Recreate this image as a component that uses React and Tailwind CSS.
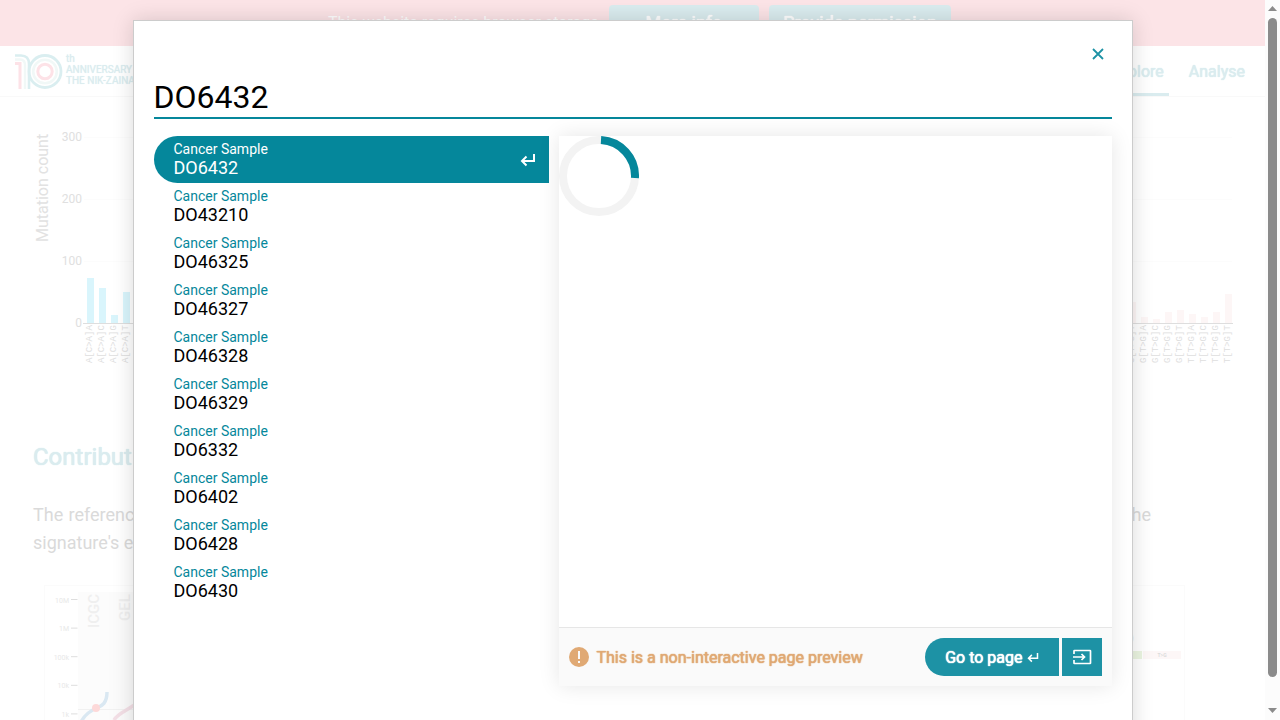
import React from "react";

const samples = [
  "DO6432",
  "DO43210",
  "DO46325",
  "DO46327",
  "DO46328",
  "DO46329",
  "DO6332",
  "DO6402",
  "DO6428",
  "DO6430",
];

const leftBars = [
  ["A[C>A]A", 45],
  ["A[C>A]C", 35],
  ["A[C>A]G", 8],
  ["A[C>A]T", 31],
];

const rightBars = [
  ["C[T>G]T", 21],
  ["G[T>G]A", 6],
  ["G[T>G]C", 4],
  ["G[T>G]G", 11],
  ["G[T>G]T", 13],
  ["T[T>G]A", 9],
  ["T[T>G]C", 6],
  ["T[T>G]G", 11],
  ["T[T>G]T", 29],
];

function ReturnIcon({ className }) {
  return (
    <svg viewBox="0 0 16 14" className={className} fill="none" stroke="currentColor" strokeWidth="2" aria-hidden="true">
      <path d="M14 1V8H2.500M6.500 3.500L2 8L6.500 12.500" />
    </svg>
  );
}

function Logo() {
  return (
    <svg viewBox="0 0 48 36" className="h-9 w-12 shrink-0" fill="none" aria-hidden="true">
      <path d="M0 1.500H6Q14 1.500 14 10V35" stroke="#daeef0" strokeWidth="2.600" />
      <path d="M0 5.500H5Q10 5.500 10 11V35" stroke="#f1f8f7" strokeWidth="2.400" />
      <path d="M0 9.500H5V35" stroke="#fde2e7" strokeWidth="3" />
      <circle cx="30" cy="17.500" r="16" stroke="#daeef0" strokeWidth="2.800" />
      <circle cx="30" cy="17.500" r="11.800" stroke="#f1f8f7" strokeWidth="2.600" />
      <circle cx="30" cy="17.500" r="7.200" stroke="#fde2e7" strokeWidth="3" />
    </svg>
  );
}

function Bars({ items, start, color }) {
  return items.map(([label, value], i) => {
    const x = start + i * 12;
    return (
      <g key={label}>
        <rect x={x} y={203 - value} width="7" height={value} fill={color} />
        <text
          transform={`translate(${x + 5} 243) rotate(-90)`}
          fontSize="9"
          fill="#dedede"
          fontFamily="'Liberation Mono', monospace"
        >
          {label}
        </text>
      </g>
    );
  });
}

function MutationChart() {
  return (
    <svg viewBox="0 0 1265 260" className="block w-full" fontFamily="Roboto, sans-serif">
      <text transform="translate(48 122) rotate(-90)" fontSize="16" fill="#e2e2e2">
        Mutation count
      </text>
      {[300, 200, 100, 0].map((tick, i) => (
        <g key={tick}>
          <text x="82" y={21 + i * 62} fontSize="12" fill="#e0e0e0" textAnchor="end">
            {tick}
          </text>
          <path d={`M84 ${17.5 + i * 62}H1232`} stroke="#fcfcfc" />
        </g>
      ))}
      <Bars items={leftBars} start={87} color="#d9f5fc" />
      <Bars items={rightBars} start={1129} color="#fdf6f6" />
      <path d="M83 203.500H1233" stroke="#dedede" />
    </svg>
  );
}

function ContributionChart() {
  return (
    <svg viewBox="0 0 1265 140" className="block w-full" fontFamily="Roboto, sans-serif">
      <rect x="44.500" y="5.500" width="1140" height="160" fill="none" stroke="#fbfbfb" />
      <rect x="78" y="12" width="31" height="128" fill="#fcfcfc" />
      <rect x="109" y="12" width="31" height="128" fill="#fbfbfb" />
      {["10M", "1M", "100k", "10k", "1k"].map((tick, i) => (
        <g key={tick}>
          <text x="69" y={22.5 + i * 28.6} fontSize="7" fill="#e8e8e8" textAnchor="end">
            {tick}
          </text>
          <path d={`M71 ${19.5 + i * 28.6}h6.500`} stroke="#dedede" />
        </g>
      ))}
      <text transform="translate(99 48) rotate(-90)" fontSize="15" fontWeight="500" fill="#efefef">
        ICGC
      </text>
      <text transform="translate(130 41) rotate(-90)" fontSize="15" fontWeight="500" fill="#efefef">
        GEL
      </text>
      <path d="M78 129.500H140" stroke="#f1f1f1" />
      <path d="M81 142C85 134 92 130 97 128S107 123 107 112" fill="none" stroke="#dae8f2" strokeWidth="3.500" />
      <circle cx="96" cy="128" r="4" fill="#fdd9d9" />
      <path d="M114 140C118 133 127 131 140 121" fill="none" stroke="#f3dfe6" strokeWidth="3.500" />
      <rect x="1100" y="71" width="42" height="8" fill="#ebf5e1" />
      <rect x="1143" y="71" width="38" height="8" fill="#fdf7f7" />
      <text x="1162" y="77" fontSize="5" fontWeight="700" fill="#dcdcdc" textAnchor="middle">
        T&gt;G
      </text>
      <text x="1134" y="62" fontSize="12" fill="#d6d6d6" textAnchor="end">
        )
      </text>
    </svg>
  );
}

function Page() {
  return (
    <div className="h-full overflow-hidden">
      <div className="flex h-[46px] items-start gap-2.5 bg-[#fce4e7] pl-[328px] pt-[5px] whitespace-nowrap text-white">
        <p className="w-[271px] pt-1.5 text-base">This website requires browser storage</p>
        <button className="h-9 w-[150px] rounded-sm bg-[#daecef] text-lg [text-shadow:0_0_1px_currentColor,0_0_1px_currentColor]">
          More info
        </button>
        <button className="h-9 w-[182px] rounded-sm bg-[#daecef] text-lg [text-shadow:0_0_1px_currentColor,0_0_1px_currentColor]">
          Provide permission
        </button>
      </div>
      <header className="flex h-[51px] items-stretch justify-between border-b border-[#f9f9f9] pr-[15px] pl-[15px]">
        <div className="flex items-center gap-[3px] pt-0.5 text-[10px] leading-[11px] text-[#daecef] [text-shadow:0_0_1px_currentColor]">
          <Logo />
          <div className="pb-1.5">
            <div>th</div>
            <div>ANNIVERSARY OF</div>
            <div>THE NIK-ZAINAL LAB</div>
          </div>
        </div>
        <nav className="flex gap-[15px] text-base text-[#daecef] [text-shadow:0_0_1px_currentColor,0_0_1px_currentColor]">
          <a href="#explore" className="flex items-center border-b-[3px] border-[#daecef] px-[5px] pt-1">
            Explore
          </a>
          <a href="#analyse" className="flex items-center border-b-[3px] border-transparent px-[5px] pt-1">
            Analyse
          </a>
        </nav>
      </header>
      <div className="pt-[23px]">
        <MutationChart />
      </div>
      <section className="pr-8 pl-[33px] pt-[61px]">
        <h2 className="text-2xl text-[#daecef] [text-shadow:0_0_1px_currentColor,0_0_1px_currentColor]">Contributions</h2>
        <p className="mr-[82px] mt-7 text-justify text-lg leading-7 text-[#dadada]">
          The reference signature contributions in every sample were shown below. Each point is the number of
          mutations that were assigned to the signature&apos;s exposure in a tumour.
        </p>
      </section>
      <div className="pt-[23px]">
        <ContributionChart />
      </div>
    </div>
  );
}

function SearchDialog() {
  return (
    <div
      role="dialog"
      aria-label="Search"
      className="flex h-[760px] w-[1000px] max-w-full flex-col border border-[#ccc] bg-white px-5 shadow-[0_0_20px_rgba(0,0,0,0.15)]"
    >
      <div className="flex h-14 items-center justify-end pt-[9px]">
        <button aria-label="Close" className="flex size-7 items-center justify-center text-[#1d92a5]">
          <svg viewBox="0 0 12 12" className="size-3" stroke="currentColor" strokeWidth="1.800" aria-hidden="true">
            <path d="M1 1L11 11M11 1L1 11" />
          </svg>
        </button>
      </div>
      <input
        aria-label="Search term"
        defaultValue="DO6432"
        className="h-[42px] w-full shrink-0 border-b-2 border-[#05879b] bg-transparent text-[32px] text-black outline-none"
      />
      <div className="mt-[17px] flex gap-2.5">
        <ul className="w-[395px] shrink-0">
          {samples.map((id, i) => (
            <li key={id}>
              <a
                href={`#${id}`}
                className={
                  i === 0
                    ? "flex h-[47px] items-center justify-between rounded-l-full bg-[#05879b] pr-[13px] pl-5 text-white"
                    : "flex h-[47px] items-center pl-5 text-black"
                }
              >
                <span className="flex flex-col pb-px">
                  <span className={i === 0 ? "text-sm leading-[18px]" : "text-sm leading-[18px] text-[#05879b]"}>
                    Cancer Sample
                  </span>
                  <span className="text-lg leading-5">{id}</span>
                </span>
                {i === 0 && <ReturnIcon className="h-[14px] w-4" />}
              </a>
            </li>
          ))}
        </ul>
        <section className="flex h-[550px] min-w-0 flex-1 flex-col bg-white shadow-[0_0_20px_rgba(0,0,0,0.1)]">
          <div className="flex-1">
            <svg viewBox="0 0 80 80" className="size-20" fill="none" strokeWidth="8" role="status" aria-label="Loading">
              <circle cx="40" cy="40" r="36" stroke="#f3f3f3" />
              <path d="M42 4.060A36 36 0 0 1 75.940 42" stroke="#05879b" />
            </svg>
          </div>
          <footer className="flex h-[59px] items-center justify-between border-t border-[#e6e6e6] bg-[#fafafa] px-2.5">
            <p className="flex items-center gap-2 text-[#e0a974] [text-shadow:0_0_1px_currentColor,0_0_1px_currentColor]">
              <svg viewBox="0 0 20 20" className="size-5" aria-hidden="true">
                <circle cx="10" cy="10" r="10" fill="currentColor" />
                <path d="M9 4h2v8H9zM9 14h2v2H9z" fill="#fafafa" />
              </svg>
              <span className="pt-0.5">This is a non-interactive page preview</span>
            </p>
            <div className="flex gap-[3px] text-white">
              <button className="flex h-[38px] items-center gap-1 rounded-l-full bg-[#1d92a5] pr-5 pl-5 [text-shadow:0_0_1px_currentColor,0_0_1px_currentColor]">
                <span className="pt-0.5">Go to page</span>
                <ReturnIcon className="h-[11px] w-3" />
              </button>
              <button aria-label="Open page" className="flex h-[38px] w-10 items-center justify-center bg-[#1d92a5]">
                <svg viewBox="0 0 20 16" className="h-4 w-5" fill="none" stroke="currentColor" strokeWidth="1.700" aria-hidden="true">
                  <path d="M2 5V2Q2 1.500 2.500 1.500H18Q18.500 1.500 18.500 2V14Q18.500 14.500 18 14.500H2.500Q2 14.500 2 14V11M1 8H12M9.500 5L12.500 8L9.500 11" />
                </svg>
              </button>
            </div>
          </footer>
        </section>
      </div>
    </div>
  );
}

export default function App() {
  return (
    <div className="flex h-screen overflow-hidden bg-white font-[Roboto,sans-serif]">
      <main className="relative min-w-0 flex-1">
        <Page />
        <div className="absolute inset-0 flex items-start justify-center overflow-hidden pt-5">
          <SearchDialog />
        </div>
      </main>
      <div className="flex w-[15px] shrink-0 flex-col items-center bg-[#fcfcfc] pt-[6px] pb-[7px]" aria-hidden="true">
        <svg viewBox="0 0 9 5" className="h-[5px] w-[9px] shrink-0" fill="#8b8b8b">
          <path d="M0 5L4.500 0L9 5Z" />
        </svg>
        <div className="mt-[7px] mb-[31px] w-[9px] flex-1 rounded-full bg-[#8b8b8b]" />
        <svg viewBox="0 0 9 5" className="h-[5px] w-[9px] shrink-0" fill="#8b8b8b">
          <path d="M0 0L4.500 5L9 0Z" />
        </svg>
      </div>
    </div>
  );
}
